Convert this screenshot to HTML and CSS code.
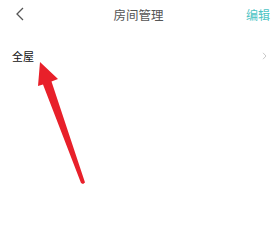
FILE: index.html
```html
<!DOCTYPE html>
<html>
<head>
<meta charset="utf-8">
<link rel="stylesheet" href="styles.css">
</head>
<body>
<div class="page">
  <header class="topbar">
    <span class="back">
      <svg width="11" height="14" viewBox="0 0 11 14"><path d="M8 1 L2 7 L8 13" fill="none" stroke="#555" stroke-width="1.3"/></svg>
    </span>
    <span class="title">房间管理</span>
    <span class="edit">编辑</span>
  </header>
  <div class="row">
    <span class="name">全屋</span>
    <svg class="chev" width="5" height="8" viewBox="0 0 5 8"><path d="M1 0.8 L4 4 L1 7.2" fill="none" stroke="#c8c8c8" stroke-width="1"/></svg>
  </div>
  <svg class="arrow" width="280" height="242" viewBox="0 0 280 242">
    <polygon points="40,62 58,79 51.5,81.5 85,182.5 83,184 81,183 43,84.5 38,86" fill="#e8202a"/>
  </svg>
</div>
</body>
</html>
```
FILE: styles.css
```css
html, body { margin: 0; padding: 0; background: #fff; }
body { font-family: "Noto Sans CJK SC", "Noto Sans", sans-serif; }
.page { position: relative; width: 280px; height: 242px; overflow: hidden; }
.topbar {
  display: flex; align-items: center; justify-content: space-between;
  height: 28px; padding: 0 10px 0 15px;
}
.back { display: flex; width: 36px; }
.title { font-size: 12.5px; color: #555; }
.edit { width: 44px; text-align: right; font-size: 12px; color: #4cc4c4; }
.row {
  display: flex; align-items: center; justify-content: space-between;
  height: 56px; padding: 0 13px 0 12px;
}
.name { font-size: 11px; color: #111; }
.arrow { position: absolute; left: 0; top: 0; }
```
